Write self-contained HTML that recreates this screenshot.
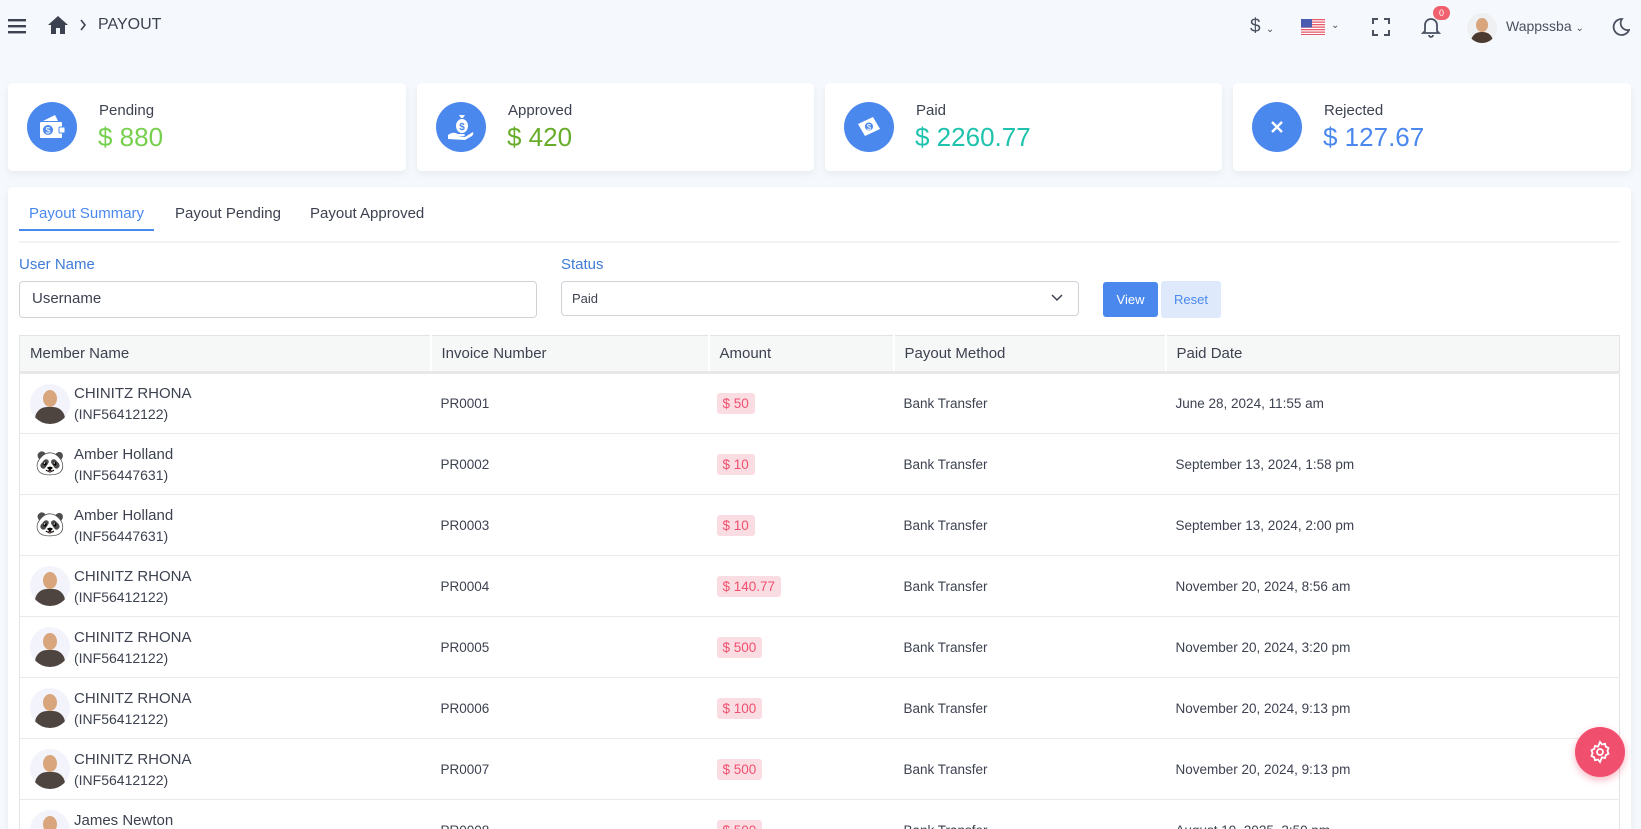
<!DOCTYPE html>
<html style="width:1641px;height:829px;overflow:hidden"><head><meta charset="utf-8"><style>
*{box-sizing:border-box;margin:0;padding:0}
body{width:1641px;height:829px;overflow:hidden;background:#f5f9fd;font-family:"Liberation Sans",sans-serif;color:#3b3f4a;position:relative}
.abs{position:absolute}
.card{position:absolute;background:#fff;border-radius:5px;box-shadow:0 3px 8px rgba(0,0,0,.06)}
.ic{position:absolute;left:19px;top:19px;width:50px;height:50px;border-radius:50%;background:#4a88ee;display:flex;align-items:center;justify-content:center}
.lbl{position:absolute;left:91px;top:19px;font-size:15px;color:#3d4250}
.val{position:absolute;left:90px;top:39px;font-size:26px}
.tab{position:absolute;top:205px;font-size:15px;color:#3d4250}
#wrap{position:absolute;left:0;top:0;width:1641px;height:829px;overflow:hidden}
table{position:absolute;left:19px;top:335px;width:1601px;border-collapse:collapse;font-size:13.5px}
th{background:#f6f7f7;font-weight:normal;text-align:left;font-size:15px;height:37px;padding-left:10px;border-right:2px solid #fff;border-bottom:3px solid #e8e8e8;color:#3d4250}
td{height:61px;border-bottom:1px solid #e9e9e9;padding-left:10px;color:#3d4250}
tr td:first-child,tr th:first-child{border-left:1px solid #e3e3e3}
tr td:last-child,tr th:last-child{border-right:1px solid #e3e3e3}
.mem{display:flex;align-items:center}
.av{width:40px;height:40px;border-radius:50%;background:#f3f4fb;margin-right:4px;position:relative;overflow:hidden;flex:none}
.nm{font-size:15px;line-height:21px}
.id{font-size:14px;line-height:20px}
.bd{display:inline-block;background:#fadde3;color:#f0506e;padding:3px 6px;border-radius:3px;font-size:13.5px;margin-left:-2px}
</style></head><body><div id="wrap">
<svg class="abs" style="left:8px;top:18px" width="18" height="16"><rect y="1" width="18" height="2.4" fill="#3d4250"/><rect y="7" width="18" height="2.4" fill="#3d4250"/><rect y="13" width="18" height="2.4" fill="#3d4250"/></svg>
<svg class="abs" style="left:48px;top:16px" width="20" height="18" viewBox="0 0 20 18"><path d="M10 0 L20 9 H17 V18 H12 V12 H8 V18 H3 V9 H0 Z" fill="#3d4250"/></svg>
<svg class="abs" style="left:79px;top:19px" width="8" height="12"><path d="M2 1 L6 6 L2 11" stroke="#3d4250" stroke-width="1.6" fill="none"/></svg>
<div class="abs" style="left:98px;top:16px;font-size:16px;color:#3d4250">PAYOUT</div>
<div class="abs" style="left:1250px;top:16px;font-size:19px;color:#4a5060">$ <span style="font-size:10px">⌄</span></div>
<svg class="abs" style="left:1301px;top:19px" width="24" height="16"><rect width="24" height="16" fill="#fff"/><g fill="#e55b6b"><rect y="0" width="24" height="1.3"/><rect y="2.5" width="24" height="1.3"/><rect y="5" width="24" height="1.3"/><rect y="7.5" width="24" height="1.3"/><rect y="10" width="24" height="1.3"/><rect y="12.5" width="24" height="1.3"/><rect y="15" width="24" height="1"/></g><rect width="11" height="8.5" fill="#4a5cb0"/></svg>
<div class="abs" style="left:1331px;top:20px;font-size:10px;color:#4a5060">⌄</div>
<svg class="abs" style="left:1372px;top:18px" width="18" height="18" fill="none" stroke="#4a5060" stroke-width="2"><path d="M1 6V1H6M12 1H17V6M17 12V17H12M6 17H1V12"/></svg>
<svg class="abs" style="left:1421px;top:16px" width="20" height="22" fill="none" stroke="#4a5060" stroke-width="1.8"><path d="M4 15V9a6 6 0 0 1 12 0v6l2 2H2z"/><path d="M8 19a2 2 0 0 0 4 0"/></svg>
<div class="abs" style="left:1433px;top:6px;width:17px;height:14px;border-radius:7px;background:#f0606e;color:#fff;font-size:9px;text-align:center;line-height:14px">0</div>
<div class="abs" style="left:1467px;top:13px;width:30px;height:30px;border-radius:50%;background:#eef0f2;overflow:hidden"><div style="position:absolute;left:9px;top:5px;width:12px;height:14px;border-radius:50%;background:#d9a57c"></div><div style="position:absolute;left:4px;top:19px;width:22px;height:14px;border-radius:10px 10px 0 0;background:#4b3a30"></div></div>
<div class="abs" style="left:1506px;top:18px;font-size:14px;color:#4a5060">Wappssba <span style="font-size:10px">⌄</span></div>
<svg class="abs" style="left:1610px;top:17px" width="20" height="20" fill="none" stroke="#4a5060" stroke-width="1.8"><path d="M12 2a8 8 0 1 0 7 11A7 7 0 0 1 12 2z"/></svg>

<div class="card" style="left:8px;top:83px;width:398px;height:88px">
 <div class="ic"><svg width="28" height="26" viewBox="0 0 28 26" fill="#fff"><path d="M5 7 L17 1 L20 7Z"/><rect x="2" y="8" width="22" height="16" rx="1"/><rect x="21" y="13" width="6" height="6" rx="1" fill="#fff" stroke="#4a88ee"/><circle cx="10" cy="16" r="5" fill="#4a88ee"/><text x="10" y="19.5" font-size="9" text-anchor="middle" fill="#fff" font-family="Liberation Sans">$</text></svg></div>
 <div class="lbl">Pending</div><div class="val" style="color:#76d04e">$ 880</div></div>
<div class="card" style="left:417px;top:83px;width:397px;height:88px">
 <div class="ic"><svg width="28" height="28" viewBox="0 0 28 28" fill="#fff"><path d="M12 2h6l-2 3h-2z"/><ellipse cx="15" cy="13" rx="6" ry="7"/><text x="15" y="17" font-size="10" text-anchor="middle" fill="#4a88ee" font-family="Liberation Sans" font-weight="bold">$</text><path d="M1 22 Q6 18 11 21 L17 21 Q19 22 17 23 L11 23 L18 24 L26 19 Q27 21 25 23 L18 27 L1 26Z"/></svg></div>
 <div class="lbl">Approved</div><div class="val" style="color:#68ad2a">$ 420</div></div>
<div class="card" style="left:825px;top:83px;width:397px;height:88px">
 <div class="ic"><svg width="28" height="24" viewBox="0 0 28 24" fill="#fff"><path d="M3 9 L18 2 L25 14 L10 21Z"/><circle cx="14" cy="11.5" r="4" fill="#4a88ee"/><text x="14" y="15" font-size="8" text-anchor="middle" fill="#fff" font-family="Liberation Sans">$</text></svg></div>
 <div class="lbl">Paid</div><div class="val" style="color:#1fc2ac">$ 2260.77</div></div>
<div class="card" style="left:1233px;top:83px;width:398px;height:88px">
 <div class="ic"><svg width="14" height="14" stroke="#fff" stroke-width="2.4"><path d="M2 2L12 12M12 2L2 12"/></svg></div>
 <div class="lbl">Rejected</div><div class="val" style="color:#4a88ee">$ 127.67</div></div>

<div class="card" style="left:8px;top:187px;width:1623px;height:660px"></div>
<div class="tab" style="left:29px;color:#4a88ee">Payout Summary</div>
<div class="tab" style="left:175px">Payout Pending</div>
<div class="tab" style="left:310px">Payout Approved</div>
<div class="abs" style="left:19px;top:229px;width:135px;height:2px;background:#4a88ee"></div>
<div class="abs" style="left:19px;top:241px;width:1601px;height:2px;background:#f1f3f5"></div>
<div class="abs" style="left:19px;top:256px;font-size:15px;color:#3f7bd6">User Name</div>
<div class="abs" style="left:561px;top:256px;font-size:15px;color:#3f7bd6">Status</div>
<div class="abs" style="left:19px;top:281px;width:518px;height:37px;border:1px solid #cfd3d8;border-radius:4px;padding:8px 12px;font-size:15px;color:#3d4250">Username</div>
<div class="abs" style="left:561px;top:281px;width:518px;height:35px;border:1px solid #cfd3d8;border-radius:4px;padding:9px 10px;font-size:13px;color:#3d4250">Paid</div>
<svg class="abs" style="left:1051px;top:294px" width="12" height="8" fill="none" stroke="#3d4250" stroke-width="1.5"><path d="M1 1L6 6L11 1"/></svg>
<div class="abs" style="left:1103px;top:282px;width:55px;height:35px;background:#4a88ee;border-radius:3px;color:#fff;font-size:13px;text-align:center;line-height:35px">View</div>
<div class="abs" style="left:1161px;top:281px;width:60px;height:37px;background:#deeafc;border-radius:3px;color:#4a88ee;font-size:13px;text-align:center;line-height:37px">Reset</div>

<table>
<tr style="border-top:1px solid #e3e3e3"><th style="width:411px">Member Name</th><th style="width:278px">Invoice Number</th><th style="width:185px">Amount</th><th style="width:272px">Payout Method</th><th>Paid Date</th></tr>
<tr><td><div class="mem"><div class="av"><div style="position:absolute;left:13px;top:6px;width:14px;height:17px;border-radius:50%;background:#d9a57c"></div><div style="position:absolute;left:5px;top:23px;width:30px;height:20px;border-radius:12px 12px 0 0;background:#4e4540"></div></div><div><div class="nm">CHINITZ RHONA</div><div class="id">(INF56412122)</div></div></div></td><td>PR0001</td><td><span class="bd">$ 50</span></td><td>Bank Transfer</td><td>June 28, 2024, 11:55 am</td></tr>
<tr><td><div class="mem"><div class="av" style="background:#fff;font-size:24px;text-align:center;line-height:40px">🐼</div><div><div class="nm">Amber Holland</div><div class="id">(INF56447631)</div></div></div></td><td>PR0002</td><td><span class="bd">$ 10</span></td><td>Bank Transfer</td><td>September 13, 2024, 1:58 pm</td></tr>
<tr><td><div class="mem"><div class="av" style="background:#fff;font-size:24px;text-align:center;line-height:40px">🐼</div><div><div class="nm">Amber Holland</div><div class="id">(INF56447631)</div></div></div></td><td>PR0003</td><td><span class="bd">$ 10</span></td><td>Bank Transfer</td><td>September 13, 2024, 2:00 pm</td></tr>
<tr><td><div class="mem"><div class="av"><div style="position:absolute;left:13px;top:6px;width:14px;height:17px;border-radius:50%;background:#d9a57c"></div><div style="position:absolute;left:5px;top:23px;width:30px;height:20px;border-radius:12px 12px 0 0;background:#4e4540"></div></div><div><div class="nm">CHINITZ RHONA</div><div class="id">(INF56412122)</div></div></div></td><td>PR0004</td><td><span class="bd">$ 140.77</span></td><td>Bank Transfer</td><td>November 20, 2024, 8:56 am</td></tr>
<tr><td><div class="mem"><div class="av"><div style="position:absolute;left:13px;top:6px;width:14px;height:17px;border-radius:50%;background:#d9a57c"></div><div style="position:absolute;left:5px;top:23px;width:30px;height:20px;border-radius:12px 12px 0 0;background:#4e4540"></div></div><div><div class="nm">CHINITZ RHONA</div><div class="id">(INF56412122)</div></div></div></td><td>PR0005</td><td><span class="bd">$ 500</span></td><td>Bank Transfer</td><td>November 20, 2024, 3:20 pm</td></tr>
<tr><td><div class="mem"><div class="av"><div style="position:absolute;left:13px;top:6px;width:14px;height:17px;border-radius:50%;background:#d9a57c"></div><div style="position:absolute;left:5px;top:23px;width:30px;height:20px;border-radius:12px 12px 0 0;background:#4e4540"></div></div><div><div class="nm">CHINITZ RHONA</div><div class="id">(INF56412122)</div></div></div></td><td>PR0006</td><td><span class="bd">$ 100</span></td><td>Bank Transfer</td><td>November 20, 2024, 9:13 pm</td></tr>
<tr><td><div class="mem"><div class="av"><div style="position:absolute;left:13px;top:6px;width:14px;height:17px;border-radius:50%;background:#d9a57c"></div><div style="position:absolute;left:5px;top:23px;width:30px;height:20px;border-radius:12px 12px 0 0;background:#4e4540"></div></div><div><div class="nm">CHINITZ RHONA</div><div class="id">(INF56412122)</div></div></div></td><td>PR0007</td><td><span class="bd">$ 500</span></td><td>Bank Transfer</td><td>November 20, 2024, 9:13 pm</td></tr>
<tr><td><div class="mem"><div class="av"><div style="position:absolute;left:13px;top:6px;width:14px;height:17px;border-radius:50%;background:#d9a57c"></div><div style="position:absolute;left:5px;top:23px;width:30px;height:20px;border-radius:12px 12px 0 0;background:#4e4540"></div></div><div><div class="nm">James Newton</div><div class="id">(INF56400001)</div></div></div></td><td>PR0008</td><td><span class="bd">$ 500</span></td><td>Bank Transfer</td><td>August 19, 2025, 3:50 pm</td></tr>
</table>

<div class="abs" style="left:1575px;top:727px;width:50px;height:50px;border-radius:50%;background:#f0506e;display:flex;align-items:center;justify-content:center;box-shadow:0 3px 8px rgba(240,80,110,.4)">
<svg width="24" height="24" viewBox="0 0 24 24" fill="none" stroke="#fff" stroke-width="1.8"><circle cx="12" cy="12" r="3"/><path d="M12 2l2 2.5 3-.8.8 3 2.7 1.3-1 2.9 1 2.9-2.7 1.3-.8 3-3-.8L12 22l-2-2.5-3 .8-.8-3L3.5 16l1-2.9-1-2.9L6.2 8.9l.8-3 3 .8z"/></svg></div>
</div></body></html>
